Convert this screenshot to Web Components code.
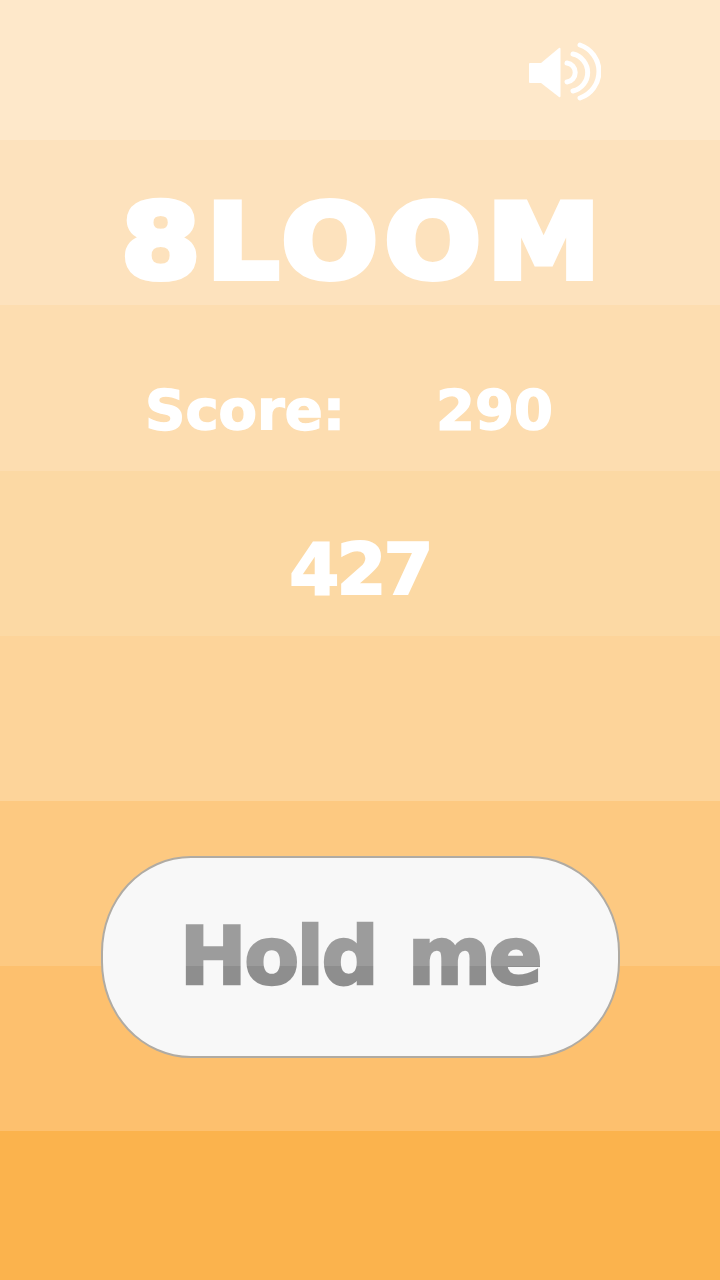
<!DOCTYPE html>
<html>
<head>
<meta charset="utf-8">
<title>8LOOM</title>
<style>
  html, body { margin: 0; padding: 0; }
</style>
</head>
<body>
<bloom-app>
  <sound-toggle slot="sound"></sound-toggle>
  <span slot="title">8LOOM</span>
  <score-row slot="score" label="Score:" value="290"></score-row>
  <span slot="target">427</span>
  <hold-button slot="action">Hold me</hold-button>
</bloom-app>

<script>
class BloomApp extends HTMLElement {
  constructor() {
    super();
    this.attachShadow({ mode: "open" }).innerHTML = `
      <style>
        :host {
          display: flex;
          flex-direction: column;
          align-items: center;
          width: 720px;
          height: 1280px;
          overflow: hidden;
          color: #fff;
          font-family: "DejaVu Sans", sans-serif;
          font-weight: 700;
          background: linear-gradient(to bottom,
            #fee8ca 0 140px, #fde2bd 140px 305px, #fdddb0 305px 471px,
            #fcd9a4 471px 636px, #fdd49a 636px 801px, #fdc981 801px 966px,
            #fdc06e 966px 1131px, #fbb34d 1131px 1280px);
        }
        .sound { align-self: flex-end; height: 60px; padding: 42px 119px 0 0; }
        .title {
          height: 140px;
          margin-top: 70px;
          padding-left: 8px;
          font-size: 104px;
          line-height: 140px;
          letter-spacing: 6px;
          -webkit-text-stroke: 6px #fff;
          /* the original face is wider than anything installed */
          transform: scaleX(1.09);
        }
        .score { margin-top: 64px; margin-right: 22px; }
        .target {
          height: 90px;
          margin-top: 80px;
          font-size: 72px;
          line-height: 90px;
          letter-spacing: -3px;
          -webkit-text-stroke: 2px #fff;
        }
        .action { margin-top: 242px; }
      </style>
      <div class="sound"><slot name="sound"></slot></div>
      <div class="title"><slot name="title"></slot></div>
      <div class="score"><slot name="score"></slot></div>
      <div class="target"><slot name="target"></slot></div>
      <div class="action"><slot name="action"></slot></div>
    `;
  }
}

class SoundToggle extends HTMLElement {
  constructor() {
    super();
    this.attachShadow({ mode: "open" }).innerHTML = `
      <style>
        :host { display: block; width: 72px; height: 60px; }
        svg { display: block; }
      </style>
      <svg width="72" height="60" viewBox="0 0 72 60" fill="none">
        <path d="M1 21H12L30 6Q31.500 5 31.500 7V54Q31.500 56 30 55L12 41H1Q0 41 0 40V22Q0 21 1 21Z" fill="#fff"/>
        <g stroke="#fff" stroke-width="5" stroke-linecap="round">
          <path d="M38 21A9.600 9.600 0 0 1 38 40"/>
          <path d="M44 12A19 19 0 0 1 44 49"/>
          <path d="M51 3A28 28 0 0 1 51 56"/>
        </g>
      </svg>
    `;
  }
}

class ScoreRow extends HTMLElement {
  constructor() {
    super();
    this.attachShadow({ mode: "open" }).innerHTML = `
      <style>
        :host {
          display: flex;
          gap: 91px;
          font-size: 56px;
          line-height: 68px;
          -webkit-text-stroke: 1.500px #fff;
        }
      </style>
      <span id="label"></span><span id="value"></span>
    `;
    this.shadowRoot.getElementById("label").textContent = this.getAttribute("label");
    this.shadowRoot.getElementById("value").textContent = this.getAttribute("value");
  }
}

class HoldButton extends HTMLElement {
  constructor() {
    super();
    this.attachShadow({ mode: "open" }).innerHTML = `
      <style>
        :host {
          display: flex;
          align-items: center;
          justify-content: center;
          box-sizing: border-box;
          width: 519px;
          height: 202px;
          border: 2px solid #b0aba3;
          border-radius: 90px / 96px;
          background: #f8f8f8;
          cursor: pointer;
        }
        span {
          display: block;
          font-size: 80px;
          line-height: 100px;
          letter-spacing: -2.500px;
          word-spacing: 6px;
          color: transparent;
          -webkit-text-stroke: 2.500px transparent;
          /* the darker lower part of the label lines up with the band edge behind */
          background: linear-gradient(to bottom, #9c9c9c 0 59px, #8e8e8e 59px 100px);
          -webkit-background-clip: text;
          background-clip: text;
        }
      </style>
      <span><slot></slot></span>
    `;
  }
}

customElements.define("bloom-app", BloomApp);
customElements.define("sound-toggle", SoundToggle);
customElements.define("score-row", ScoreRow);
customElements.define("hold-button", HoldButton);
</script>
</body>
</html>
